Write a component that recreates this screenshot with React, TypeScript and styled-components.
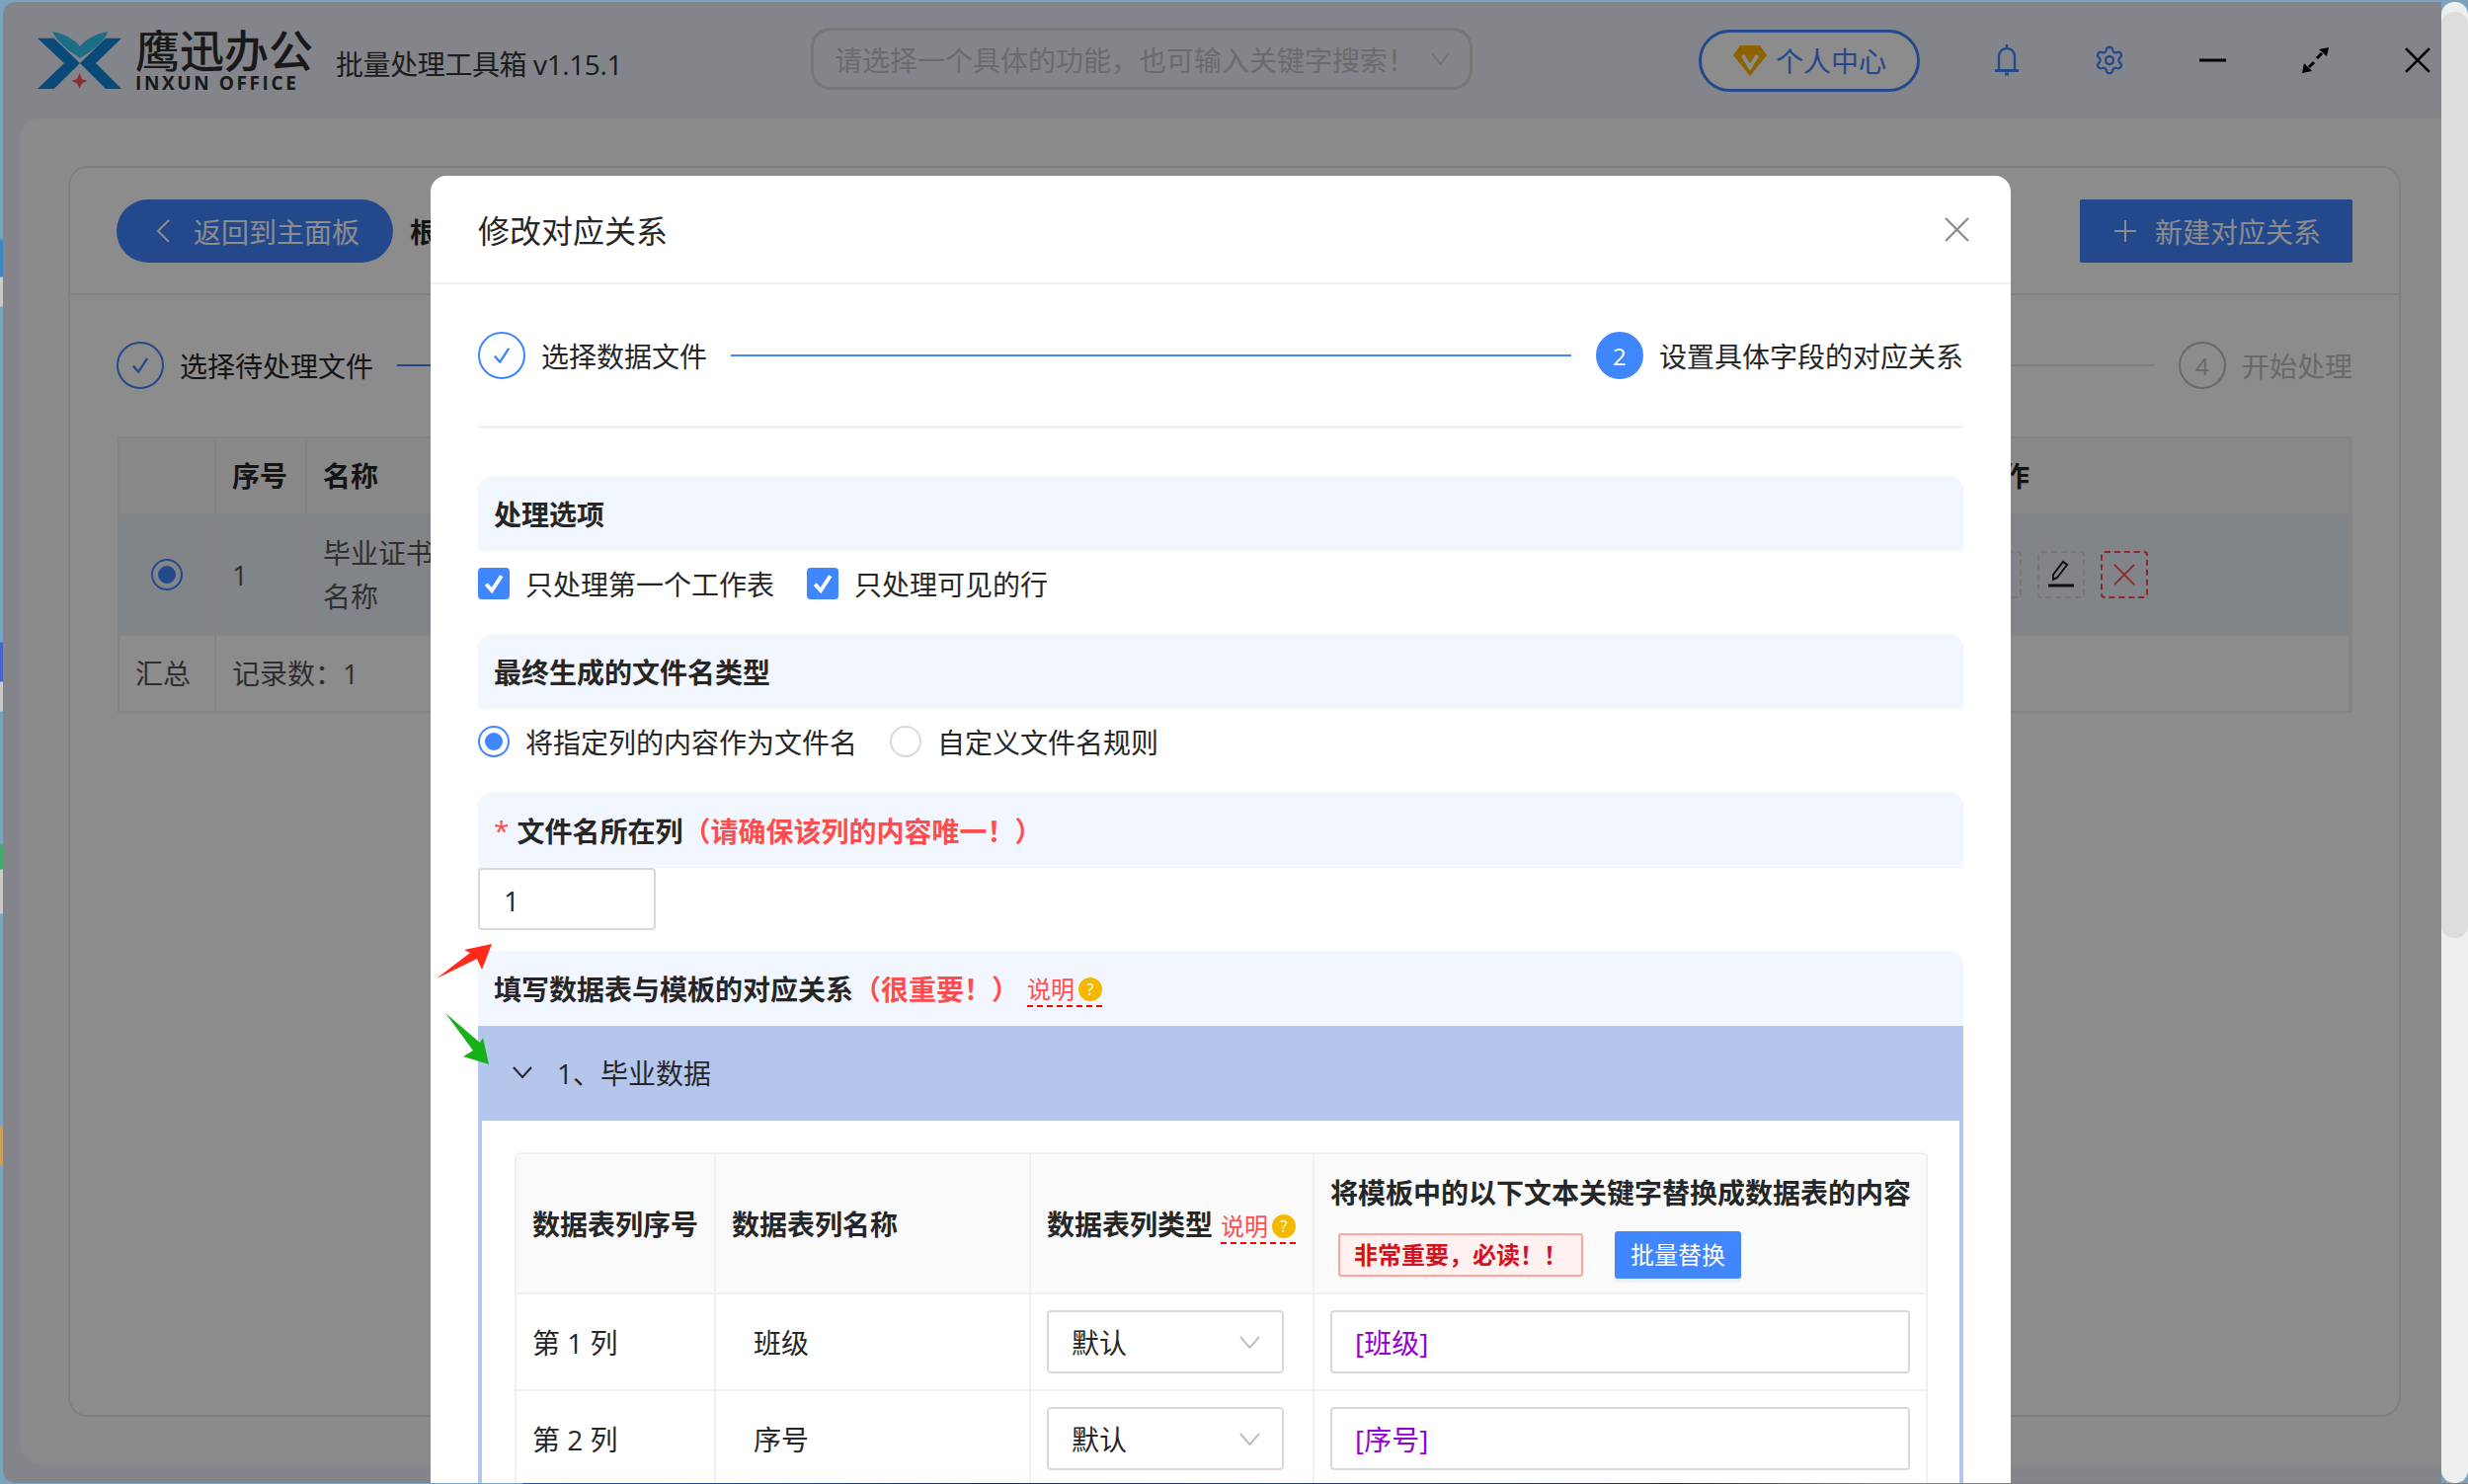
import React from 'react';
import styled, { createGlobalStyle } from 'styled-components';
import { Settings } from 'lucide-react';

const blue = '#4086ff';
const font = '"Open Sans", "Noto Sans CJK SC", sans-serif';

const GlobalStyle = createGlobalStyle`
  * { box-sizing: border-box; }
  html, body { margin: 0; padding: 0; width: 2499px; height: 1503px; overflow: hidden; }
  body {
    font-family: ${font};
    font-size: 28px;
    color: #262626;
    background: linear-gradient(180deg,
      #7ba3bf 0, #7ba3bf 240px, #3d87c4 245px, #3d87c4 280px, #c9c9c9 281px, #c9c9c9 310px, #7ba3bf 311px,
      #7ba3bf 650px, #4a63c4 651px, #4a63c4 690px, #c9c9c9 691px, #c9c9c9 720px, #7ba3bf 721px,
      #7ba3bf 855px, #3fae6a 856px, #3fae6a 880px, #c9c9c9 881px, #c9c9c9 925px, #7ba3bf 926px,
      #7ba3bf 1140px, #c9a05a 1141px, #c9a05a 1180px, #7ba3bf 1181px);
  }
`;

/* ---------- shell ---------- */

const Root = styled.div`
  width: 2499px;
  height: 1503px;
  padding-top: 2px;
  display: flex;
  flex-direction: column;
`;

const Main = styled.div`
  flex: 1;
  min-height: 0;
  display: flex;
`;

const TaskbarEdge = styled.div`
  height: 1px;
  background: linear-gradient(90deg, #7ba3bf 0, #7ba3bf 529px, #2a4f96 530px, #24407c 800px, #1f2a44 1000px, #2a3c6c 1300px, #2b2b2b 1700px, #7d8084 1900px, #7d8084 100%);
`;

const Stage = styled.div`
  position: relative;
  margin-left: 3px;
  width: 2469px;
  overflow: hidden;
  border-radius: 12px 0 0 12px;
  background: #eef3fc;
`;

const Mask = styled.div`
  position: absolute;
  inset: 0;
  background: rgba(0, 0, 0, 0.45);
`;

const ScrollTrack = styled.div`
  width: 27px;
  padding-top: 10px;
  background: #eeeeee;
  border-radius: 13px;
`;

const ScrollThumb = styled.div`
  height: 938px;
  background: #dcdcdc;
  border-radius: 13px;
`;

/* ---------- app header ---------- */

const AppHeader = styled.header`
  height: 118px;
  padding-left: 35px;
  display: flex;
  align-items: center;
`;

const LogoText = styled.div`
  margin-left: 14px;
  width: 180px;
  display: flex;
  flex-direction: column;
`;

const LogoName = styled.div`
  font-size: 45px;
  line-height: 44px;
  font-weight: 500;
  color: #2e2e2e;
`;

const LogoLatin = styled.div`
  margin-top: 2px;
  font-size: 19px;
  line-height: 16px;
  font-weight: 700;
  letter-spacing: 2.6px;
  color: #2e2e2e;
  white-space: nowrap;
`;

const AppTitle = styled.div`
  margin-left: 23px;
  width: 286px;
  font-size: 28px;
  line-height: 40px;
  letter-spacing: -0.4px;
  color: #333;
  white-space: nowrap;
  margin-top: 8px;
`;

const SearchBox = styled.div`
  margin-left: 195px;
  width: 670px;
  height: 63px;
  margin-top: -3px;
  padding: 0 20px 0 21px;
  border: 3px solid #d9d9d9;
  border-radius: 20px;
  display: flex;
  align-items: center;
  justify-content: space-between;
  font-size: 28px;
  color: #c4c4c4;
  white-space: nowrap;
`;

const ProfileButton = styled.div`
  margin-left: 229px;
  width: 224px;
  height: 63px;
  border: 3px solid ${blue};
  border-radius: 32px;
  background: #fff;
  color: ${blue};
  display: flex;
  align-items: center;
  padding-left: 32px;
  gap: 9px;
  font-size: 28px;
`;

const IconSlot = styled.div`
  margin-left: 72px;
  width: 32px;
  height: 32px;
  display: flex;
  align-items: center;
  justify-content: center;
  color: ${blue};
`;

const WindowSlot = styled(IconSlot)`
  color: #000;
`;

/* ---------- page underneath the modal ---------- */

const Content = styled.div`
  height: 1363px;
  margin-left: 17px;
  padding: 48px 41px 48px 49px;
  background: #fbfbfb;
  border-radius: 20px 0 0 20px;
`;

const Card = styled.div`
  height: 100%;
  padding: 0 47px;
  background: #fff;
  border: 2px solid #e8e8e8;
  border-radius: 20px;
`;

const CardHead = styled.div`
  height: 129px;
  margin: 0 -47px;
  padding: 0 47px;
  border-bottom: 2px solid #ececec;
  display: flex;
  align-items: center;
`;

const BackButton = styled.div`
  width: 280px;
  height: 64px;
  padding-left: 39px;
  border-radius: 32px;
  background: ${blue};
  color: #fff;
  display: flex;
  align-items: center;
  gap: 22px;
`;

const PageName = styled.div`
  margin-left: 17px;
  font-weight: 700;
`;

const NewButton = styled.div`
  margin-left: auto;
  width: 276px;
  height: 64px;
  padding-left: 35px;
  border-radius: 2px;
  background: ${blue};
  color: #fff;
  display: flex;
  align-items: center;
  gap: 19px;
`;

const Steps = styled.div<{ $bottom: number }>`
  height: 48px;
  display: flex;
  align-items: center;
  margin-bottom: ${p => p.$bottom}px;
`;

const PageSteps = styled(Steps)`
  margin-top: 47px;
`;

const StepCircle = styled.div<{ $state: 'done' | 'active' | 'wait' }>`
  width: 48px;
  height: 48px;
  flex: none;
  border-radius: 50%;
  border: 2px solid ${p => (p.$state === 'wait' ? '#bfbfbf' : blue)};
  background: ${p => (p.$state === 'active' ? blue : 'transparent')};
  color: ${p => (p.$state === 'active' ? '#fff' : p.$state === 'wait' ? '#bfbfbf' : blue)};
  font-size: 24px;
  display: flex;
  align-items: center;
  justify-content: center;
`;

const StepLabel = styled.div<{ $muted?: boolean }>`
  margin-left: 16px;
  white-space: nowrap;
  color: ${p => (p.$muted ? '#bfbfbf' : '#262626')};
`;

const StepLine = styled.div<{ $muted?: boolean }>`
  flex: 1;
  height: 2px;
  background: ${p => (p.$muted ? '#e8e8e8' : blue)};
`;

const StepLineGap = styled.div`
  width: 24px;
  flex: none;
`;

const BaseTable = styled.table`
  width: 2263px;
  margin-left: 1px;
  table-layout: fixed;
  border-collapse: separate;
  border-spacing: 0;
  border: 2px solid #f0f0f0;

  th, td {
    padding: 0 16px;
    text-align: left;
    border-right: 2px solid #f0f0f0;
    border-bottom: 2px solid #f0f0f0;
    font-size: 28px;
    line-height: 44px;
  }
  th { height: 78px; background: #f8f8f8; font-weight: 700; }
  tr:last-child td { border-bottom: 0; }
`;

const SelectedRow = styled.tr`
  td { height: 122px; background: #ecf2fb; color: #555; }
`;

const TotalRow = styled.tr`
  td { height: 76px; color: #555; }
`;

const CenterCell = styled.td`
  text-align: center !important;
`;

const ActionCell = styled.div`
  display: flex;
  align-items: center;
  gap: 16px;
`;

const ActionButton = styled.div<{ $danger?: boolean }>`
  width: 48px;
  height: 48px;
  border: 2px dashed ${p => (p.$danger ? '#ff4d4f' : '#d9d9d9')};
  border-radius: 4px;
  background: ${p => (p.$danger ? 'transparent' : '#ecf2fb')};
  display: flex;
  align-items: center;
  justify-content: center;
`;

/* ---------- modal ---------- */

const Modal = styled.div`
  position: absolute;
  left: 433px;
  top: 176px;
  width: 1600px;
  height: 1324px;
  overflow: hidden;
  background: #fff;
  border-radius: 16px 16px 0 0;
`;

const ModalHead = styled.div`
  height: 110px;
  padding: 0 42px 0 48px;
  border-bottom: 2px solid #f0f0f0;
  display: flex;
  align-items: center;
  justify-content: space-between;
  font-size: 32px;
`;

const ModalBody = styled.div`
  padding: 48px 48px 0;
`;

const ModalStepLine = styled(StepLine)`
  margin: 0 25px 0 24px;
`;

const Divider = styled.div`
  height: 3px;
  margin-bottom: 48px;
  background: #f0f0f0;
`;

const SectionBar = styled.div<{ $tall?: boolean }>`
  height: ${p => (p.$tall ? 77 : 76)}px;
  padding: 0 16px;
  display: flex;
  align-items: center;
  background: #f2f6fe;
  border-radius: 14px 14px 0 0;
  font-weight: 700;
  white-space: nowrap;
`;

const OptionRow = styled.div`
  padding: 17px 0 35px;
  height: 84px;
  display: flex;
  align-items: center;
`;

const Option = styled.div<{ $width: number }>`
  width: ${p => p.$width}px;
  display: flex;
  align-items: center;
  gap: 16px;
  white-space: nowrap;
`;

const CheckBox = styled.div`
  width: 32px;
  height: 32px;
  flex: none;
  background: ${blue};
  border-radius: 4px;
  display: flex;
  align-items: center;
  justify-content: center;
`;

const Radio = styled.div<{ $on?: boolean }>`
  width: 32px;
  height: 32px;
  flex: none;
  border-radius: 50%;
  border: 2px solid ${p => (p.$on ? blue : '#d9d9d9')};
  display: flex;
  align-items: center;
  justify-content: center;
  background: transparent;
  &::after {
    content: '';
    display: ${p => (p.$on ? 'block' : 'none')};
    width: 18px;
    height: 18px;
    border-radius: 50%;
    background: ${blue};
  }
`;

const CellRadio = styled(Radio)`
  margin: 0 auto;
`;

const Required = styled.span`
  margin-right: 8px;
  color: #ff4d4f;
  font-weight: 400;
`;

const Warn = styled.span`
  color: #ff4d4f;
`;

const Help = styled.span<{ $left: number }>`
  margin-left: ${p => p.$left}px;
  margin-top: 4px;
  display: inline-flex;
  align-items: center;
  gap: 4px;
  height: 34px;
  border-bottom: 2px dashed #f00;
  color: #ff4d4f;
  font-size: 24px;
  font-weight: 400;
  line-height: 30px;
  white-space: nowrap;
`;

const HelpDot = styled.span`
  width: 24px;
  height: 24px;
  border-radius: 50%;
  background: #f5b800;
  color: #fff;
  font-size: 16px;
  line-height: 24px;
  text-align: center;
`;

const FieldBox = styled.div`
  width: 180px;
  height: 63px;
  margin-bottom: 21px;
  padding: 2px 0 0 24px;
  border: 2px solid #d9d9d9;
  border-radius: 4px;
  display: flex;
  align-items: center;
`;

const CollapseHead = styled.div`
  height: 96px;
  padding: 0 0 2px 35px;
  display: flex;
  align-items: center;
  gap: 25px;
  background: #b5c6ed;
`;

const CollapseBody = styled.div`
  padding: 32px 0 0 33px;
  border: 4px solid #b5c6ed;
  border-top: 0;
  height: 400px;
`;

const MapTable = styled.table`
  width: 1431px;
  table-layout: fixed;
  border-collapse: separate;
  border-spacing: 0;
  border-top: 2px solid #f0f0f0;
  border-left: 2px solid #f0f0f0;
  border-radius: 6px 6px 0 0;

  th, td {
    padding: 0 16px;
    border-right: 2px solid #f0f0f0;
    border-bottom: 2px solid #f0f0f0;
    font-size: 28px;
    text-align: left;
  }
  th { height: 142px; background: #fafafa; font-weight: 700; white-space: nowrap; }
  td { height: 98px; }
`;

const NameText = styled.span`
  margin-left: 22px;
`;

const HeadLine = styled.div`
  line-height: 44px;
  margin-top: 2px;
`;

const HeadTools = styled.div`
  margin-top: 17px;
  padding-left: 8px;
  display: flex;
  align-items: center;
  gap: 32px;
`;

const DangerTag = styled.div`
  width: 248px;
  height: 44px;
  border: 2px solid #ffa39e;
  border-radius: 3px;
  background: #fff1f0;
  color: #cf1322;
  font-size: 24px;
  line-height: 40px;
  text-align: center;
`;

const ReplaceButton = styled.div`
  width: 128px;
  height: 48px;
  border-radius: 3px;
  background: ${blue};
  box-shadow: 0 4px 0 #f0f0f0;
  color: #fff;
  font-size: 24px;
  font-weight: 400;
  line-height: 48px;
  text-align: center;
`;

const SelectBox = styled.div`
  width: 240px;
  height: 64px;
  padding: 0 22px 0 23px;
  border: 2px solid #d9d9d9;
  border-radius: 4px;
  display: flex;
  align-items: center;
  justify-content: space-between;
  color: #262626;
`;

const KeywordBox = styled.div`
  width: 587px;
  height: 64px;
  padding-left: 23px;
  border: 2px solid #d9d9d9;
  border-radius: 4px;
  display: flex;
  align-items: center;
  color: #9400d3;
`;

const RedArrow = styled.svg`
  position: absolute;
  left: 6px;
  top: 778px;
`;

const GreenArrow = styled.svg`
  position: absolute;
  left: 15px;
  top: 848px;
`;

/* ---------- drawings ---------- */

const Logo = () => (
  <svg width="85" height="58" viewBox="0 0 85 58">
    <path d="M15 0Q33 3 43 15Q53 3 71 0Q68 12 43 27Q22 14 15 0Z" fill="#33c8f5" />
    <path d="M0 6.7H16.7L43 32L16.7 58H0L27 32Z" fill="#1287da" />
    <path d="M85 6.7H69L43 32L69 58H85L59 32Z" fill="#1287da" />
    <path d="M42.5 42L45 48L50.5 50L45 52.5L42.5 58L40 52.5L34.5 50L40 48Z" fill="#ff525b" />
  </svg>
);

const Chevron = ({ w, h, color, sw = 2 }: { w: number; h: number; color: string; sw?: number }) => (
  <svg width={w} height={h} viewBox={`0 0 ${w} ${h}`} fill="none">
    <path d={`M1 1L${w / 2} ${h - 1}L${w - 1} 1`} stroke={color} strokeWidth={sw} />
  </svg>
);

const CheckMark = ({ size, color, sw = 2 }: { size: number; color: string; sw?: number }) => (
  <svg width={size} height={size} viewBox="0 0 20 20" fill="none">
    <path d="M4 10.5L8.5 15.5L16 4" stroke={color} strokeWidth={sw} />
  </svg>
);

const Cross = ({ size, color, sw = 2 }: { size: number; color: string; sw?: number }) => (
  <svg width={size} height={size} viewBox="0 0 24 24" fill="none">
    <path d="M1 1L23 23M23 1L1 23" stroke={color} strokeWidth={sw} />
  </svg>
);

const Diamond = () => (
  <svg width="34" height="31" viewBox="0 0 34 31">
    <path d="M7 0H27L34 10L17 31L0 10Z" fill="#ffb400" />
    <path d="M9.5 10L17 22L24.5 10" fill="none" stroke="#fff" strokeWidth="4" />
  </svg>
);

const Bell = () => (
  <svg width="24" height="33" viewBox="0 0 24 33" fill="none" stroke="currentColor" strokeWidth="2.4">
    <path d="M12 0V4M4 26V13C4 7 7.5 4 12 4C16.5 4 20 7 20 13V26" />
    <path d="M0 26.5H24" strokeWidth="3" />
    <path d="M10 30H14" strokeWidth="3" />
  </svg>
);

const Expand = () => (
  <svg width="27" height="26" viewBox="0 0 27 26">
    <path d="M27 0L17 2L25 9Z M0 26L10 24L2 16Z" fill="#000" />
    <path d="M20 6L15 11M12 15L7 20" stroke="#000" strokeWidth="3" />
  </svg>
);

const Pen = () => (
  <svg width="26" height="30" viewBox="0 0 26 30" fill="none" stroke="#1a1a1a">
    <path d="M5 20L5 15L15 2L19 5L9 18Z" strokeWidth="2" />
    <path d="M0 26H26" strokeWidth="3" />
  </svg>
);

export default function App() {
  return (
    <>
      <GlobalStyle />
      <Root>
        <Main>
          <Stage>
            <AppHeader>
              <Logo />
              <LogoText>
                <LogoName>鹰迅办公</LogoName>
                <LogoLatin>INXUN OFFICE</LogoLatin>
              </LogoText>
              <AppTitle>批量处理工具箱 v1.15.1</AppTitle>
              <SearchBox>
                请选择一个具体的功能，也可输入关键字搜索！
                <Chevron w={19} h={13} color="#d4d4d4" />
              </SearchBox>
              <ProfileButton>
                <Diamond />
                个人中心
              </ProfileButton>
              <IconSlot><Bell /></IconSlot>
              <IconSlot><Settings size={34} strokeWidth={1.7} /></IconSlot>
              <WindowSlot><svg width="27" height="4"><rect width="27" height="3" y="0.5" /></svg></WindowSlot>
              <WindowSlot><Expand /></WindowSlot>
              <WindowSlot><Cross size={26} color="#000" sw={2.4} /></WindowSlot>
            </AppHeader>

            <Content>
              <Card>
                <CardHead>
                  <BackButton>
                    <svg width="17" height="24" viewBox="0 0 17 24" fill="none">
                      <path d="M14 1L3 12L14 23" stroke="#fff" strokeWidth="2" />
                    </svg>
                    返回到主面板
                  </BackButton>
                  <PageName>根</PageName>
                  <NewButton>
                    <svg width="22" height="22" viewBox="0 0 22 22">
                      <path d="M11 0V22M0 11H22" stroke="#fff" strokeWidth="2" />
                    </svg>
                    新建对应关系
                  </NewButton>
                </CardHead>

                <PageSteps $bottom={48}>
                  <StepCircle $state="done"><CheckMark size={24} color={blue} /></StepCircle>
                  <StepLabel>选择待处理文件</StepLabel>
                  <StepLineGap />
                  <StepLine />
                  <StepLine $muted />
                  <StepLineGap />
                  <StepCircle $state="wait">4</StepCircle>
                  <StepLabel $muted>开始处理</StepLabel>
                </PageSteps>

                <BaseTable>
                  <colgroup>
                    <col style={{ width: 98 }} />
                    <col style={{ width: 92 }} />
                    <col style={{ width: 1672 }} />
                    <col />
                  </colgroup>
                  <thead>
                    <tr>
                      <th />
                      <th>序号</th>
                      <th>名称</th>
                      <th>操作</th>
                    </tr>
                  </thead>
                  <tbody>
                    <SelectedRow>
                      <CenterCell><CellRadio $on /></CenterCell>
                      <td>1</td>
                      <td>毕业证书<br />名称</td>
                      <td>
                        <ActionCell>
                          <ActionButton />
                          <ActionButton><Pen /></ActionButton>
                          <ActionButton $danger><Cross size={22} color="#ff4d4f" /></ActionButton>
                        </ActionCell>
                      </td>
                    </SelectedRow>
                    <TotalRow>
                      <td>汇总</td>
                      <td colSpan={3}>记录数：1</td>
                    </TotalRow>
                  </tbody>
                </BaseTable>
              </Card>
            </Content>

            <Mask />

            <Modal>
              <ModalHead>
                修改对应关系
                <Cross size={25} color="#8c8c8c" sw={2.2} />
              </ModalHead>
              <ModalBody>
                <Steps $bottom={47}>
                  <StepCircle $state="done"><CheckMark size={24} color={blue} /></StepCircle>
                  <StepLabel>选择数据文件</StepLabel>
                  <ModalStepLine />
                  <StepCircle $state="active">2</StepCircle>
                  <StepLabel>设置具体字段的对应关系</StepLabel>
                </Steps>
                <Divider />

                <SectionBar>处理选项</SectionBar>
                <OptionRow>
                  <Option $width={333}>
                    <CheckBox><CheckMark size={26} color="#fff" sw={3} /></CheckBox>
                    只处理第一个工作表
                  </Option>
                  <Option $width={300}>
                    <CheckBox><CheckMark size={26} color="#fff" sw={3} /></CheckBox>
                    只处理可见的行
                  </Option>
                </OptionRow>

                <SectionBar>最终生成的文件名类型</SectionBar>
                <OptionRow>
                  <Option $width={417}>
                    <Radio $on />
                    将指定列的内容作为文件名
                  </Option>
                  <Option $width={300}>
                    <Radio />
                    自定义文件名规则
                  </Option>
                </OptionRow>

                <SectionBar $tall>
                  <Required>*</Required>
                  文件名所在列
                  <Warn>（请确保该列的内容唯一！）</Warn>
                </SectionBar>
                <FieldBox>1</FieldBox>

                <SectionBar>
                  填写数据表与模板的对应关系
                  <Warn>（很重要！）</Warn>
                  <Help $left={8}>说明<HelpDot>?</HelpDot></Help>
                </SectionBar>
                <CollapseHead>
                  <Chevron w={20} h={12} color="#262626" />
                  1、毕业数据
                </CollapseHead>
                <CollapseBody>
                  <MapTable>
                    <colgroup>
                      <col style={{ width: 202 }} />
                      <col style={{ width: 319 }} />
                      <col style={{ width: 287 }} />
                      <col style={{ width: 621 }} />
                    </colgroup>
                    <thead>
                      <tr>
                        <th>数据表列序号</th>
                        <th>数据表列名称</th>
                        <th>
                          数据表列类型
                          <Help $left={8}>说明<HelpDot>?</HelpDot></Help>
                        </th>
                        <th>
                          <HeadLine>将模板中的以下文本关键字替换成数据表的内容</HeadLine>
                          <HeadTools>
                            <DangerTag>非常重要，必读！！</DangerTag>
                            <ReplaceButton>批量替换</ReplaceButton>
                          </HeadTools>
                        </th>
                      </tr>
                    </thead>
                    <tbody>
                      {[
                        { no: '第 1 列', name: '班级' },
                        { no: '第 2 列', name: '序号' },
                      ].map(row => (
                        <tr key={row.no}>
                          <td>{row.no}</td>
                          <td><NameText>{row.name}</NameText></td>
                          <td>
                            <SelectBox>
                              默认
                              <Chevron w={21} h={13} color="#bfbfbf" />
                            </SelectBox>
                          </td>
                          <td><KeywordBox>[{row.name}]</KeywordBox></td>
                        </tr>
                      ))}
                    </tbody>
                  </MapTable>
                </CollapseBody>
              </ModalBody>

              <RedArrow width="56" height="35" viewBox="0 0 56 35">
                <path d="M0 35L34 9L28 6L56 0L46 26L41 15Z" fill="#ff2a1a" />
              </RedArrow>
              <GreenArrow width="44" height="52" viewBox="0 0 44 52">
                <path d="M0 0L35 30L38 25L44 52L18 44L28 38Z" fill="#18b018" />
              </GreenArrow>
            </Modal>
          </Stage>
          <ScrollTrack><ScrollThumb /></ScrollTrack>
        </Main>
        <TaskbarEdge />
      </Root>
    </>
  );
}
